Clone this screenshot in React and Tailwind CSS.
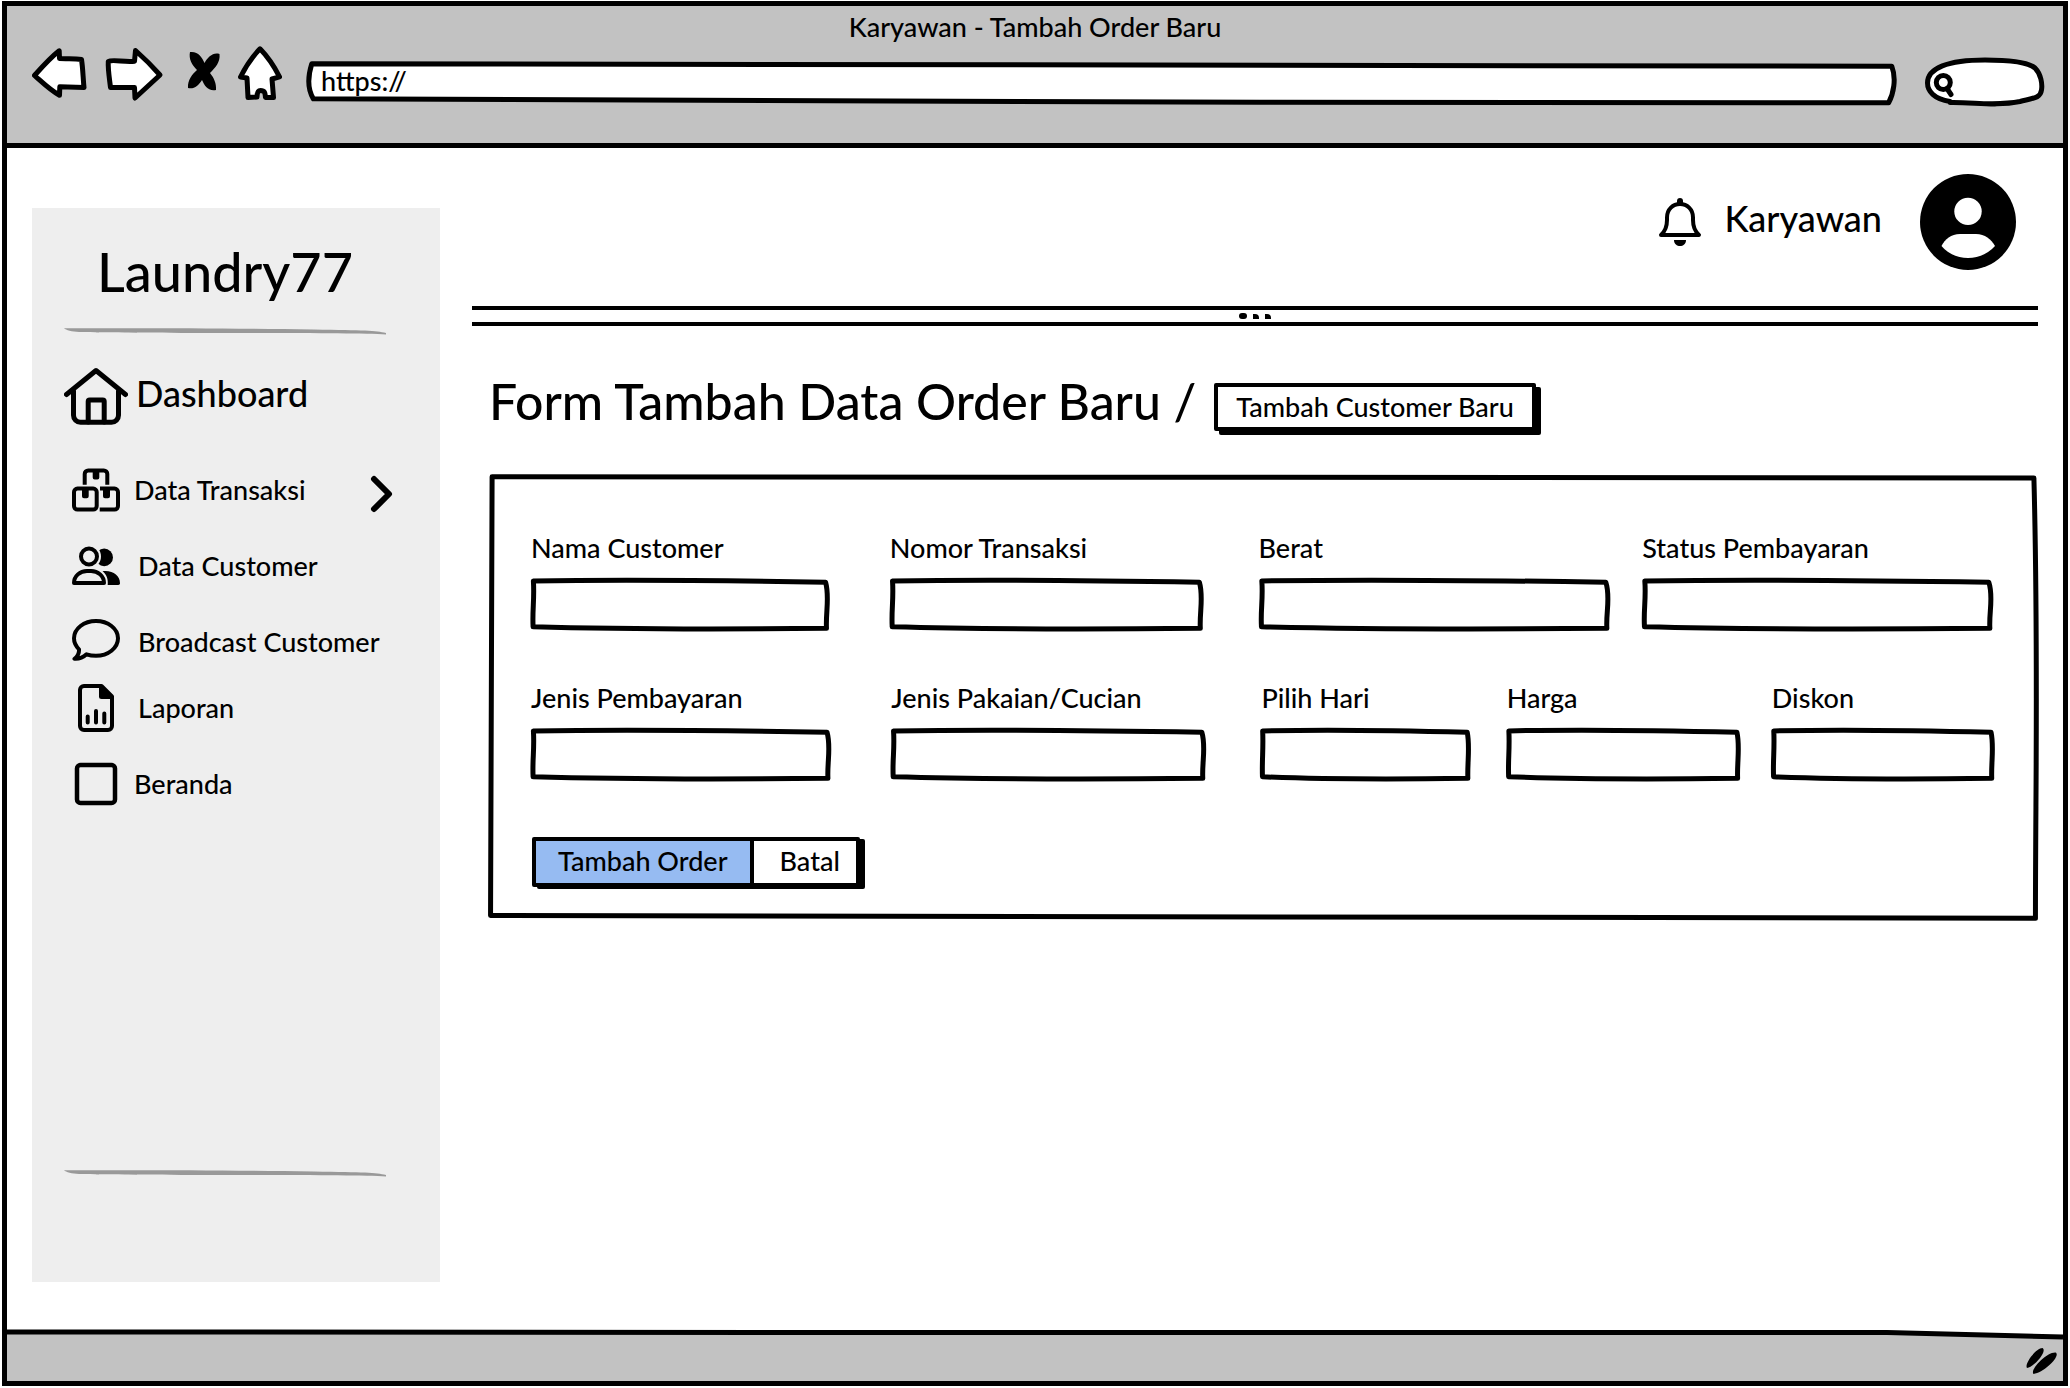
import React from "react";

function SketchBox({ d, fill = "#fff", width = 5 }) {
  return (
    <svg
      aria-hidden="true"
      className="pointer-events-none absolute inset-0 h-full w-full overflow-visible"
      viewBox="0 0 100 100"
      preserveAspectRatio="none"
    >
      <path d={d} fill={fill} stroke="#000" strokeWidth={width} strokeLinejoin="round" vectorEffect="non-scaling-stroke" />
    </svg>
  );
}

const FIELD_PATH = "M.8 5.500C25 3 60 4 98.600 8 C100 35 98.600 65 98.900 95 C60 97 30 97 .7 92 C.4 60 1.200 40 .8 5.500Z";
const PANEL_PATH = "M.2 .6 L99.800 .9 C100.100 40 99.900 70 99.900 99.600 L.1 99 C.1 50 .2 20 .2 .6Z";
const URL_PATH = "M.3 6 L99.800 12 C100.100 40 99.900 75 99.600 95 L60 94 .4 86 C.05 65 .05 35 .3 6Z";

function HouseIcon() {
  return (
    <svg className="size-16 shrink-0" viewBox="64 364 64 64" fill="none" stroke="#000" strokeWidth="5" strokeLinecap="round" strokeLinejoin="round">
      <path d="M66.500 394.500 96 370.500l29.500 24M73.500 391v24.200a7 7 0 0 0 7 7h31a7 7 0 0 0 7-7V391" />
      <path d="M88.200 422V401.500a1.500 1.500 0 0 1 1.500-1.500h13a1.500 1.500 0 0 1 1.500 1.500v20.500" />
    </svg>
  );
}

function BoxesIcon() {
  return (
    <svg className="size-12 shrink-0" viewBox="72 466 48 48" fill="none" stroke="#000" strokeWidth="4">
      <path d="M84.700 484.700V474a3.500 3.500 0 0 1 3.500-3.500h15.600a3.500 3.500 0 0 1 3.500 3.500v10.700" />
      <rect x="74" y="488.600" width="22.700" height="21" rx="3.500" />
      <path d="M100 488.600h14.500a3.500 3.500 0 0 1 3.500 3.500v14a3.500 3.500 0 0 1-3.500 3.500H99.700" />
      <path d="M92.700 470h6.600v7.500a2 2 0 0 1-2 2h-2.600a2 2 0 0 1-2-2zM82 488h6.700v8.300a2 2 0 0 1-2 2H84a2 2 0 0 1-2-2zM103 488h7v8.300a2 2 0 0 1-2 2h-3a2 2 0 0 1-2-2z" fill="#000" stroke="none" />
    </svg>
  );
}

function PeopleIcon() {
  return (
    <svg className="size-12 shrink-0" viewBox="72 546 48 48">
      <circle cx="104.200" cy="561.400" r="8.800" />
      <circle cx="89" cy="560.500" r="12" fill="#eee" />
      <circle cx="89" cy="560.500" r="8" fill="none" stroke="#000" strokeWidth="4" />
      <path d="M74 587c0-7 6-12 13-12h4c7 0 13 5 13 12z" fill="none" stroke="#000" strokeWidth="4" strokeLinejoin="round" />
      <path d="M102.500 575.300c10-1.300 17.500 4 17.500 12 0 1.200-.8 1.700-1.700 1.700h-10.600c.6-5.500-1-10.500-5.200-13.700z" />
    </svg>
  );
}

function BubbleIcon() {
  return (
    <svg className="size-12 shrink-0" viewBox="72 618 48 48" fill="none" stroke="#000" strokeWidth="4" strokeLinejoin="round">
      <path d="M96 621c-12 0-22 7.500-22 17.300 0 4.500 2 8 5 11 .3 4-1.600 7.300-4.500 9.500 4 .3 8.600-1.300 12-4.500 3 1 6 1.500 9.500 1.500 12 0 22-7.700 22-17.500S108 621 96 621z" />
    </svg>
  );
}

function ReportIcon() {
  return (
    <svg className="size-12 shrink-0" viewBox="72 684 48 48" fill="none" stroke="#000" strokeWidth="4" strokeLinejoin="round" strokeLinecap="round">
      <path d="M84 686h17.500L112 696.500V726a4 4 0 0 1-4 4H84a4 4 0 0 1-4-4v-36a4 4 0 0 1 4-4z" />
      <path d="M99 686h4l9 9v4h-10.500a2.500 2.500 0 0 1-2.500-2.500z" fill="#000" stroke="none" />
      <path d="M87.700 716.500v6M96 711v11.500M104.300 713.500v9" />
    </svg>
  );
}

function SquareIcon() {
  return (
    <svg className="size-12 shrink-0" viewBox="72 760 48 48" fill="none" stroke="#000" strokeWidth="4.500">
      <rect x="77" y="765" width="38" height="38" rx="3.500" />
    </svg>
  );
}

function ScribbleRule() {
  return (
    <svg aria-hidden="true" className="block h-2 w-full" viewBox="0 0 322 8" preserveAspectRatio="none">
      <path d="M0 .2C60 .2 150-.2 250 1.500 300 2.300 312 2.500 322 5V6.500C300 5.500 240 5.200 150 5 90 4.800 40 4.600 15 4 8 3.600 2 2 0 .2z" fill="#999" />
    </svg>
  );
}

const NAV = [
  { label: "Data Transaksi", Icon: BoxesIcon, row: "mt-[38px] gap-[14px]", chevron: true },
  { label: "Data Customer", Icon: PeopleIcon, row: "mt-7 gap-[18px]" },
  { label: "Broadcast Customer", Icon: BubbleIcon, row: "mt-7 gap-[18px]" },
  { label: "Laporan", Icon: ReportIcon, row: "mt-[18px] gap-[18px]" },
  { label: "Beranda", Icon: SquareIcon, row: "mt-7 gap-[14px]" },
];

function Sidebar() {
  return (
    <aside className="mt-15 mb-[49px] flex w-[408px] shrink-0 flex-col bg-[#eee] pt-7 pr-[54px] pb-[104px] pl-8">
      <p className="text-center text-[54px] leading-[72px]">Laundry77</p>
      <div className="mt-5">
        <ScribbleRule />
      </div>
      <nav aria-label="Menu">
        <a href="#dashboard" className="mt-7 flex h-16 items-center gap-2 text-[36px] leading-10">
          <HouseIcon />
          <span className="pb-[6px]">Dashboard</span>
        </a>
        {NAV.map(({ label, Icon, row, chevron }) => (
          <a key={label} href={"#" + label.toLowerCase().replace(" ", "-")} className={"flex h-12 items-center pl-2 text-[27px] leading-8 whitespace-nowrap " + row}>
            <Icon />
            {label}
            {chevron && (
              <svg aria-hidden="true" className="mt-2 -mr-2 ml-auto h-10 w-6" viewBox="370 474 24 40" fill="none" stroke="#000" strokeWidth="6" strokeLinecap="round" strokeLinejoin="round">
                <path d="M374 479l15 15-15 15" />
              </svg>
            )}
          </a>
        ))}
      </nav>
      <div className="mt-auto">
        <ScribbleRule />
      </div>
    </aside>
  );
}

function Field({ id, label, size }) {
  return (
    <div className={size}>
      <label htmlFor={id} className="block text-[27px] leading-8 whitespace-nowrap">
        {label}
      </label>
      <div className="relative mt-[14px] h-[53px]">
        <SketchBox d={FIELD_PATH} />
        <input id={id} type="text" className="relative h-full w-full bg-transparent px-4 text-[27px] outline-none" />
      </div>
    </div>
  );
}

function BrowserBar() {
  return (
    <header className="border-b-[5px] border-black bg-[#c2c2c2] pt-[5px] pb-[37px]">
      <p className="text-center text-[27px] leading-8">Karyawan - Tambah Order Baru</p>
      <div className="mt-[3px] flex h-15 items-start pr-[19px] pl-[25px]">
        <div className="flex gap-4">
          <button type="button" aria-label="Kembali">
            <svg className="h-15 w-14" viewBox="32 46 56 60" fill="#fff" stroke="#000" strokeWidth="5" strokeLinejoin="round">
              <path d="M34.500 75.500C43 66 50 58 59.200 50.800L59.500 58.500C67 59 74 58 81.500 59.500 83 69 83 78 84 87.500L59.800 86.800 59.500 95.300C50 90 43 83 34.500 75.500z" />
            </svg>
          </button>
          <button type="button" aria-label="Maju">
            <svg className="h-15 w-15" viewBox="104 46 60 60" fill="#fff" stroke="#000" strokeWidth="5" strokeLinejoin="round">
              <path d="M108.300 61.500C112 59 125 62.500 134.500 61.200L135.500 50.500C144 58 152 66 160 75L135 98 134.500 87.500 110.500 87.500C109.500 79 107.800 69 108.300 61.500z" />
            </svg>
          </button>
          <button type="button" aria-label="Berhenti">
            <svg className="h-15 w-[42px]" viewBox="180 46 42 60">
              <path d="M190 52c8-1 12 5 14.500 11 3.500-6 8.500-11 15-9 1 8-4 13.500-9.500 19 4 5 6.500 10.500 6 17-8 1.500-11.500-4.500-14-10-3.500 5.500-8 9.500-14 8-.5-8 4-13.500 9-18-5-5-8.500-11-7-18z" />
            </svg>
          </button>
          <button type="button" aria-label="Beranda">
            <svg className="h-15 w-11" viewBox="238 46 44 60" fill="#fff" stroke="#000" strokeWidth="5" strokeLinejoin="round">
              <path d="M260 48.800C268 57 274 66 279.500 76.800L272 79 273.500 97.500H265.500C265 94 265.500 90.500 260.500 90.500 257 90.500 257.200 94 257 97L248 97.500 247 78 240.500 77C246 66 252 57 260 48.800z" />
            </svg>
          </button>
        </div>
        <div className="relative mt-[15px] ml-[25px] h-11 flex-1">
          <SketchBox d={URL_PATH} width={5} />
          <input aria-label="Alamat" type="text" defaultValue="https://" className="relative block h-10 w-full bg-transparent px-[14px] text-[27px] outline-none" />
        </div>
        <div className="relative mt-[11px] ml-[30px] h-[50px] w-[119px]">
          <svg aria-hidden="true" className="absolute inset-0 h-full w-full overflow-visible" viewBox="1925 57 119 50" fill="#fff" stroke="#000" strokeWidth="5" strokeLinecap="round" strokeLinejoin="round">
            <path d="M1950 101.500C1934 99 1927.500 91 1927.500 83 1927.500 68 1948 60 1985 60 2010 60 2028 62 2035 68 2041 74 2042.500 84 2041.500 90 2040.500 98 2034 98 2020 101.500 1995 106.500 1975 102 1950 102.500" />
            <circle cx="1943.300" cy="82.500" r="7" fill="none" />
            <path d="M1947 88.500l4 6" />
          </svg>
          <input aria-label="Cari" type="search" className="relative h-full w-full bg-transparent pr-3 pl-9 text-[20px] outline-none" />
        </div>
      </div>
    </header>
  );
}

function TopRow() {
  return (
    <div className="flex h-24 items-center justify-end pr-[22px]">
      <button type="button" aria-label="Notifikasi">
        <svg className="h-14 w-12" viewBox="1656 194 48 56" fill="none" stroke="#000" strokeWidth="4" strokeLinejoin="round">
          <path d="M1661 235C1665.500 231 1667 226 1667 220V217.500C1667 209 1673 204 1680 204S1693 209 1693 217.500V220C1693 226 1694.500 231 1699 235z" />
          <path d="M1680 203v-2" strokeWidth="6" strokeLinecap="round" />
          <path d="M1674 240h12c0 4-3 6-6 6s-6-2-6-6z" fill="#000" stroke="none" />
        </svg>
      </button>
      <span className="ml-5 pb-2 text-[36px] leading-10">Karyawan</span>
      <svg role="img" aria-label="Profil" className="ml-[38px] size-24" viewBox="1920 174 96 96">
        <circle cx="1968" cy="222" r="48" />
        <circle cx="1968" cy="211.400" r="13.700" fill="#fff" />
        <path d="M1941.500 246C1945 239 1951 234 1960 234h16c9 0 15 5 19 12C1988 254 1978 258 1968 258S1948 254 1941.500 246z" fill="#fff" />
      </svg>
    </div>
  );
}

export default function App() {
  return (
    <div className="flex min-h-screen flex-col bg-white pt-px pr-[2px] pb-[2px] pl-[2px] font-['Lato',sans-serif] font-medium text-black">
      <div className="flex flex-1 flex-col border-[5px] border-black">
        <BrowserBar />
        <div className="flex flex-1 gap-8 pr-[25px] pl-[25px]">
          <Sidebar />
          <main className="min-w-0 flex-1 pt-[26px]">
            <TopRow />
            <div className="mt-9 flex h-5 items-center justify-center gap-[6px] border-y-4 border-black">
              <i className="h-[6px] w-2 rounded-full bg-black" />
              <i className="h-[5px] w-[6px] rounded-tr-sm bg-black" />
              <i className="h-[5px] w-[6px] rounded-tr-sm bg-black" />
            </div>
            <div className="mt-[57px] flex h-12 items-center gap-[18px] pl-[17px]">
              <h1 className="pb-3 text-[50px] leading-[60px] font-medium whitespace-nowrap">Form Tambah Data Order Baru /</h1>
              <button type="button" className="h-12 rounded-xs border-4 border-black bg-white px-[18px] text-[27px] leading-8 whitespace-nowrap shadow-[5px_4px_0_#000]">
                Tambah Customer Baru
              </button>
            </div>
            <form className="relative mt-[43px] mr-px ml-[17px] pt-[58px] pr-[43px] pb-[33px] pl-[42px]" onSubmit={(e) => e.preventDefault()}>
              <SketchBox d={PANEL_PATH} width={5} />
              <div className="relative">
                <div className="flex">
                  <Field id="nama" label="Nama Customer" size="flex-[299]" />
                  <Field id="nomor" label="Nomor Transaksi" size="ml-15 flex-[314]" />
                  <Field id="berat" label="Berat" size="ml-[55px] flex-[352]" />
                  <Field id="status" label="Status Pembayaran" size="ml-8 flex-[352]" />
                </div>
                <div className="mt-[51px] flex">
                  <Field id="bayar" label="Jenis Pembayaran" size="flex-[300]" />
                  <Field id="jenis" label="Jenis Pakaian/Cucian" size="ml-15 flex-[315]" />
                  <Field id="hari" label="Pilih Hari" size="ml-[55px] flex-[209]" />
                  <Field id="harga" label="Harga" size="ml-9 flex-[233]" />
                  <Field id="diskon" label="Diskon" size="ml-8 flex-[222]" />
                </div>
                <div className="mt-14 ml-px flex h-[50px] w-fit rounded-xs border-4 border-black bg-white text-[27px] leading-8 shadow-[5px_2px_0_#000]">
                  <button type="submit" className="border-r-4 border-black bg-[#96bbf2] px-[22px] pb-[3px]">
                    Tambah Order
                  </button>
                  <button type="button" className="pr-4 pb-[3px] pl-[26px]">
                    Batal
                  </button>
                </div>
              </div>
            </form>
          </main>
        </div>
        <footer className="relative flex h-[50px] items-center justify-end bg-[#c2c2c2]">
          <svg aria-hidden="true" className="absolute inset-x-0 top-0 h-3 w-full overflow-visible" viewBox="0 0 2056 12" preserveAspectRatio="none">
            <path d="M0 0H2056V6.500L1880 2.500H0z" fill="#fff" />
            <path d="M0 1C200 3 500 2 1000 1.500H1880L2056 6" fill="none" stroke="#000" strokeWidth="5" />
          </svg>
          <svg aria-hidden="true" className="mt-2 mr-1 h-7 w-9" viewBox="2024 1348 36 28">
            <path d="M2028 1370c-3-4 9-20 15.500-20 5 3-7 18-15.500 20zM2034.500 1376c-4-4 13-22 22-21.500 6 3-11 20-22 21.500z" />
          </svg>
        </footer>
      </div>
    </div>
  );
}
